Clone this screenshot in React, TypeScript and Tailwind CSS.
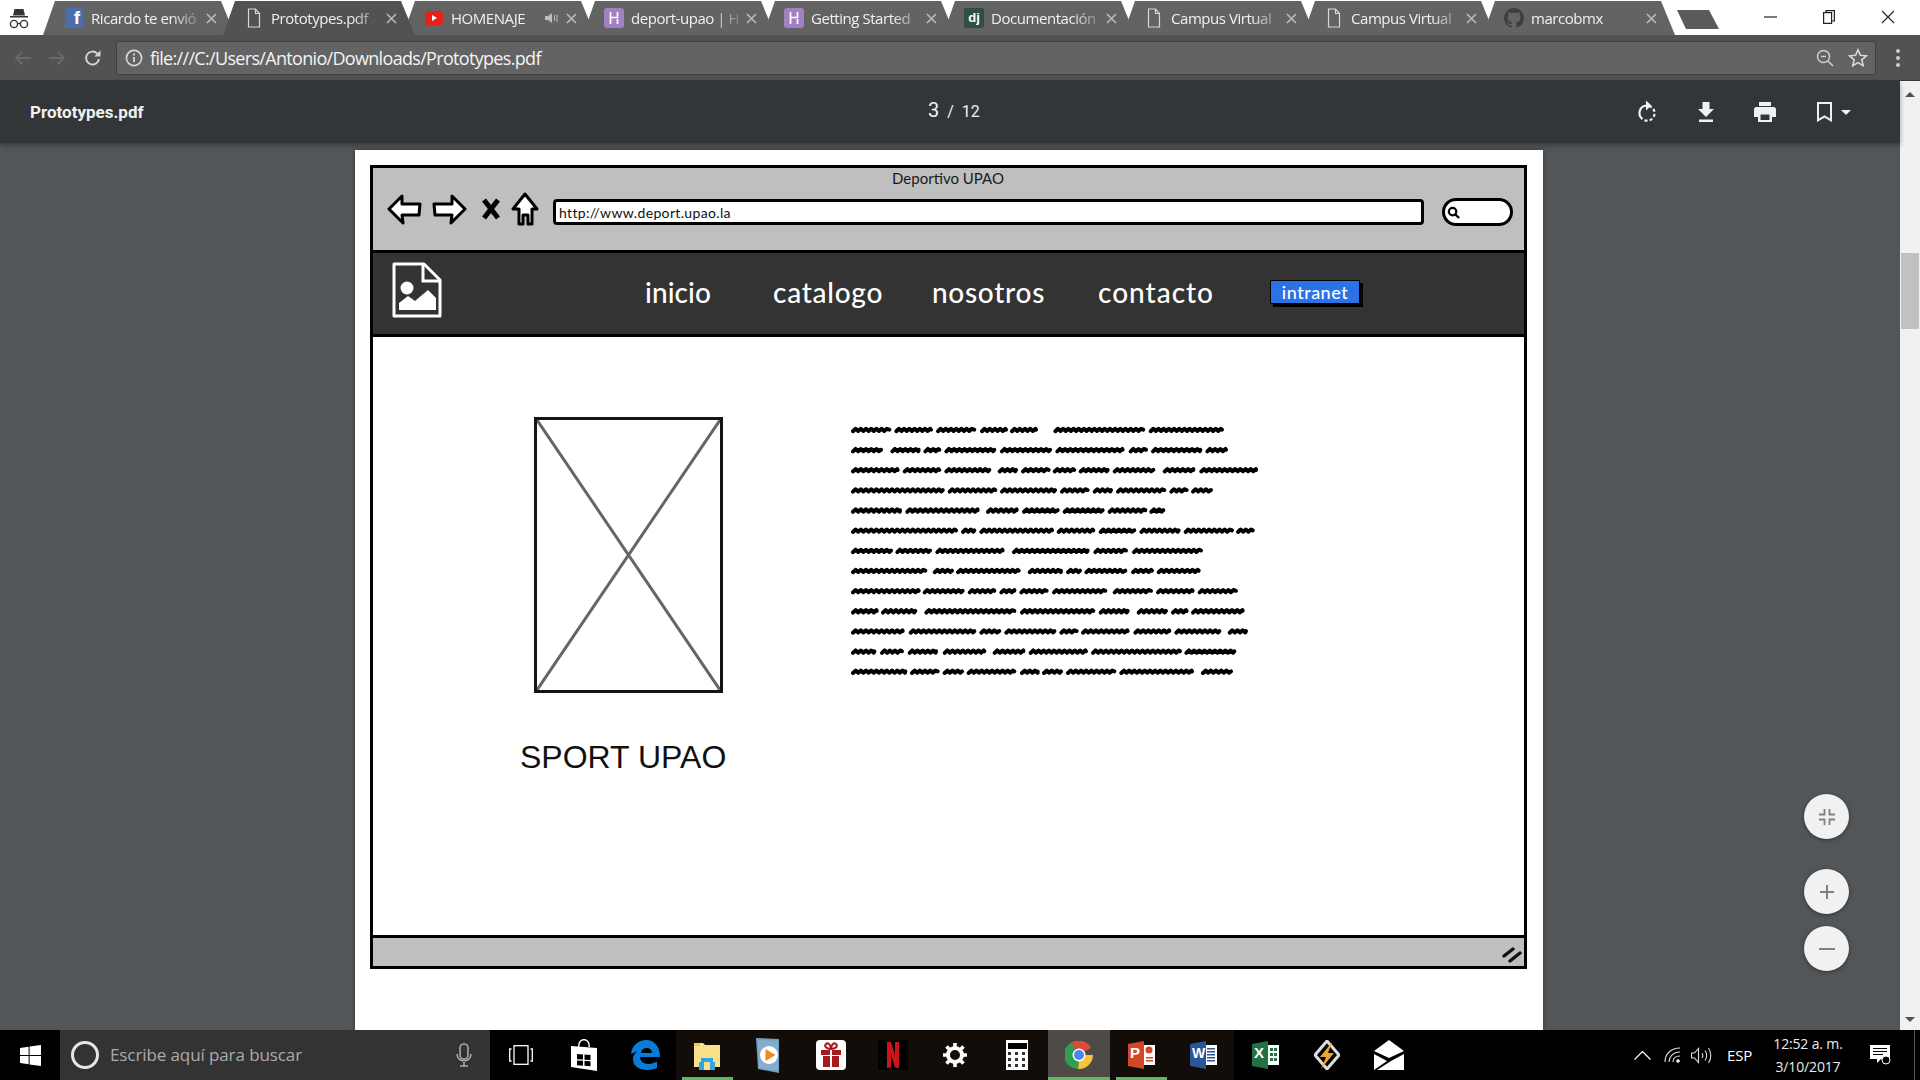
import React from "react";

const WORDS: number[][][] = [
  [[35,150],[165,275],[290,405],[422,500],[512,590],[642,912],[928,1148]],
  [[35,125],[153,238],[252,300],[315,465],[482,632],[648,850],[868,920],[935,1083],[1098,1160]],
  [[35,175],[190,300],[315,450],[475,530],[545,628],[640,705],[718,805],[820,942],[970,1062],[1080,1250]],
  [[35,310],[325,468],[482,647],[662,745],[760,815],[830,975],[990,1042],[1055,1115]],
  [[35,182],[198,415],[440,532],[548,655],[670,790],[805,918],[930,972]],
  [[35,350],[365,405],[420,638],[652,762],[778,885],[900,1018],[1033,1178],[1190,1240]],
  [[35,155],[168,272],[288,490],[518,745],[762,860],[878,1085]],
  [[35,258],[280,338],[350,538],[565,665],[680,722],[735,858],[875,938],[952,1078]],
  [[35,238],[250,370],[385,465],[480,525],[540,622],[638,798],[820,935],[950,1060],[1075,1190]],
  [[35,112],[125,228],[255,525],[542,762],[778,865],[892,980],[995,1042],[1055,1210]],
  [[35,190],[208,405],[420,480],[495,645],[660,712],[725,865],[882,990],[1005,1140],[1165,1220]],
  [[35,105],[122,188],[205,290],[310,435],[460,552],[568,740],[755,1022],[1035,1185]],
  [[35,198],[212,295],[310,368],[382,525],[542,595],[608,665],[680,825],[840,1058],[1085,1175]],
];

function wave(x0: number, x1: number, y: number) {
  let d = `M${x0} ${y + 1.2}`;
  let i = 0;
  for (let x = x0 + 2.6; x < x1; x += 2.6) {
    d += `L${x} ${y + (i % 2 === 0 ? -1.2 : 1)}`;
    i++;
  }
  return d + `L${x1} ${y - 0.4}`;
}

function Scribble() {
  return (
    <svg width="420" height="260" viewBox="0 0 420 260" className="blur-[0.7px]">
      {WORDS.map((line, li) =>
        line.map(([a, b], wi) => (
          <path key={`${li}-${wi}`} d={wave((a - 35) / 3 + 2, (b - 35) / 3, 7 + li * 20.15)} fill="none" stroke="#000" strokeWidth="4" strokeLinecap="round" strokeLinejoin="round" />
        ))
      )}
    </svg>
  );
}

const GH = () => (
  <svg width="20" height="20" viewBox="0 0 16 16" fill="#3e3e3e">
    <path d="M8 0C3.58 0 0 3.58 0 8c0 3.54 2.29 6.53 5.47 7.59.4.07.55-.17.55-.38 0-.19-.01-.82-.01-1.49-2.01.37-2.53-.49-2.69-.94-.09-.23-.48-.94-.82-1.13-.28-.15-.68-.52-.01-.53.63-.01 1.08.58 1.23.82.72 1.21 1.87.87 2.33.66.07-.52.28-.87.51-1.07-1.78-.2-3.64-.89-3.64-3.95 0-.87.31-1.59.82-2.15-.08-.2-.36-1.02.08-2.12 0 0 .67-.21 2.2.82.64-.18 1.32-.27 2-.27s1.36.09 2 .27c1.53-1.04 2.2-.82 2.2-.82.44 1.1.16 1.92.08 2.12.51.56.82 1.27.82 2.15 0 3.07-1.87 3.75-3.65 3.95.29.25.54.73.54 1.48 0 1.07-.01 1.93-.01 2.2 0 .21.15.46.55.38A8.01 8.01 0 0016 8c0-4.42-3.58-8-8-8z" />
  </svg>
);

const DocIcon = () => (
  <svg width="16" height="20" viewBox="0 0 16 20" fill="none" stroke="#d8d8d8" strokeWidth="1.2">
    <path d="M2.5 1h7l4 4.5V19h-11zM9.5 1v4.5h4" />
  </svg>
);

const Hugo = () => (
  <div className="w-5 h-5 rounded-[3px] bg-[#a082c2] flex items-center justify-center">
    <svg width="12" height="14" viewBox="0 0 12 14" fill="none" stroke="#fff" strokeWidth="1.7"><path d="M2.5 1v12M9.5 1v5.5H2.5M9.5 8v5" /></svg>
  </div>
);

type TabInfo = { icon: React.ReactNode; title: string; active?: boolean; extra?: React.ReactNode };

const TABS: TabInfo[] = [
  { title: "Ricardo te envió", icon: <div className="w-[18px] h-[20px] bg-[#4a6ea9] flex items-end justify-end overflow-hidden rounded-[1px]"><span className="text-white font-bold text-[19px] leading-[20px] pr-[3px] font-['Liberation_Sans',sans-serif]">f</span></div> },
  { title: "Prototypes.pdf", icon: <DocIcon />, active: true },
  {
    title: "HOMENAJE",
    icon: <div className="w-[18px] h-[14px] rounded-[3px] bg-[#e62117] flex items-center justify-center"><div className="w-0 h-0 border-y-[3px] border-y-transparent border-l-[5px] border-l-white" /></div>,
    extra: <svg width="13" height="12" viewBox="0 0 13 12" fill="#bdbdbd" className="absolute left-[142px] top-[12px]"><path d="M0 4h3l4-3v10l-4-3H0z" /><path d="M9 3h1v6H9zM11.5 2h1v8h-1z" /></svg>,
  },
  { title: "deport-upao | H", icon: <Hugo /> },
  { title: "Getting Started", icon: <Hugo /> },
  { title: "Documentación", icon: <div className="w-5 h-5 rounded-[2px] bg-[#2f4f43] flex items-center justify-center"><span className="text-white text-[13px] font-bold font-['Liberation_Sans',sans-serif]">dj</span></div> },
  { title: "Campus Virtual", icon: <DocIcon /> },
  { title: "Campus Virtual", icon: <DocIcon /> },
  { title: "marcobmx", icon: <GH /> },
];

function Tab({ t }: { t: TabInfo }) {
  return (
    <div className={`relative w-[192px] h-[35px] -mr-[12px] shrink-0 [clip-path:polygon(0_100%,12px_1px,178px_1px,192px_100%)] ${t.active ? "bg-[#525252] z-10" : "bg-[#636363]"}`}>
      <div className="absolute left-[21px] top-[8px] w-[20px] h-[20px] flex items-center justify-center">{t.icon}</div>
      <div className="absolute left-[48px] top-[6px] w-[112px] h-[24px] overflow-hidden whitespace-nowrap text-[15px] leading-[24px] text-[#f0f0f0] font-['Open_Sans',sans-serif] tracking-[-0.45px] [mask-image:linear-gradient(90deg,#000_72%,rgba(0,0,0,0.2)_96%)]">{t.title}</div>
      {t.extra}
      <svg width="11" height="11" viewBox="0 0 11 11" stroke="#bdbdbd" strokeWidth="1.5" className="absolute left-[163px] top-[13px]"><path d="M1 1l9 9M10 1l-9 9" /></svg>
    </div>
  );
}

function TabStrip() {
  return (
    <div className="h-[35px] bg-white flex shrink-0 relative">
      <div className="w-[43px] shrink-0 flex items-center justify-center">
        <svg width="20" height="24" viewBox="0 0 20 24" fill="none" className="mr-[5px]">
          <path d="M1 10h18v1.4H1zM4 9.5L5.5 3h9L16 9.5z" fill="#333" />
          <circle cx="5" cy="18" r="3.6" stroke="#333" strokeWidth="1.4" />
          <circle cx="15" cy="18" r="3.6" stroke="#333" strokeWidth="1.4" />
          <path d="M8.6 17.5h2.8" stroke="#333" strokeWidth="1.2" />
        </svg>
      </div>
      {TABS.map((t, i) => <Tab key={i} t={t} />)}
      <div className="ml-[14px] mt-[10px] w-[42px] h-[19px] bg-[#5a5a5a] [clip-path:polygon(0_0,32px_0,42px_100%,9px_100%)] shrink-0" />
      <div className="flex-1" />
      <div className="flex items-center pr-[25px] gap-[46px] pb-[1px]">
        <svg width="13" height="2" viewBox="0 0 13 2"><path d="M0 1h13" stroke="#222" strokeWidth="1.2" /></svg>
        <svg width="12" height="14" viewBox="0 0 12 14" fill="none" stroke="#222" strokeWidth="1.2"><path d="M.6 2.6h8v10.8h-8zM3 2.5V.6h8.4v10.4H8.8" /></svg>
        <svg width="14" height="14" viewBox="0 0 14 14" stroke="#222" strokeWidth="1.1"><path d="M1 1l12 12M13 1L1 13" /></svg>
      </div>
    </div>
  );
}

function Toolbar() {
  return (
    <div className="h-[46px] bg-[#525252] flex items-center shrink-0 border-b border-[#3a3a3a]">
      <div className="w-[116px] pl-[14px] flex items-center gap-[16px] shrink-0">
        <svg width="18" height="16" viewBox="0 0 18 16" fill="none" stroke="#696969" strokeWidth="1.8"><path d="M17 8H2M8.5 1.5L2 8l6.5 6.5" /></svg>
        <svg width="18" height="16" viewBox="0 0 18 16" fill="none" stroke="#696969" strokeWidth="1.8"><path d="M1 8h15M9.5 1.5L16 8l-6.5 6.5" /></svg>
        <svg width="18" height="18" viewBox="0 0 18 18" fill="none" className="ml-[2px]"><path d="M15 10a6.5 6.5 0 1 1-1.9-5.6L15 6.3" stroke="#d4d4d4" strokeWidth="1.9" /><path d="M16.5 1.3v6.2h-6.2z" fill="#d4d4d4" /></svg>
      </div>
      <div className="h-[34px] flex-1 rounded-[2px] bg-[#636363] border border-[#3f3f3f] flex items-center mr-[13px]">
        <svg width="18" height="18" viewBox="0 0 18 18" fill="none" className="ml-[8px]"><circle cx="9" cy="9" r="7.6" stroke="#d8d8d8" strokeWidth="1.6" /><path d="M9 8v5M9 4.6v2" stroke="#d8d8d8" strokeWidth="1.8" /></svg>
        <span className="ml-[7px] pt-[1px] text-[18px] text-[#f4f4f4] font-['Open_Sans',sans-serif] tracking-[-0.68px] whitespace-nowrap">file:///C:/Users/Antonio/Downloads/Prototypes.pdf</span>
        <div className="flex-1" />
        <svg width="18" height="18" viewBox="0 0 18 18" fill="none" stroke="#cfcfcf" strokeWidth="1.5" className="mr-[14px]"><circle cx="7.5" cy="7.5" r="6" /><path d="M5 7.5h5M12 12l5 5" /></svg>
        <svg width="20" height="19" viewBox="0 0 20 19" fill="none" stroke="#d8d8d8" strokeWidth="1.6" className="mr-[7px]"><path d="M10 1.8l2.4 5.5 6 .5-4.6 4 1.4 5.9-5.2-3.1-5.2 3.1 1.4-5.9-4.6-4 6-.5z" /></svg>
      </div>
      <div className="w-[20px] mr-[12px] -ml-[1px] flex flex-col items-center gap-[3px] shrink-0">
        <div className="w-1 h-1 rounded-full bg-[#cfcfcf]" /><div className="w-1 h-1 rounded-full bg-[#cfcfcf]" /><div className="w-1 h-1 rounded-full bg-[#cfcfcf]" />
      </div>
    </div>
  );
}

function PdfBar() {
  return (
    <div className="h-[62px] bg-[#323639] flex items-center relative z-10 shrink-0 shadow-[0_2px_5px_rgba(0,0,0,0.35)] text-[#f1f1f1] font-['Roboto',sans-serif]">
      <div className="w-[928px] pl-[30px] pt-[2px] text-[17px] font-bold shrink-0">Prototypes.pdf</div>
      <div className="flex items-baseline w-[250px] shrink-0 -mt-[4px]">
        <span className="text-[20px]">3</span>
        <span className="text-[16px] ml-[8px]">/</span>
        <span className="text-[16px] ml-[8px]">12</span>
      </div>
      <div className="flex-1" />
      <div className="flex items-center pr-[49px]">
        <svg width="20" height="24" viewBox="0 0 20 24" fill="none" className="mr-[40px]">
          <path d="M9.500 5.500a7.500 7.500 0 0 0-4 13.500" stroke="#f1f1f1" strokeWidth="2.2" />
          <path d="M12 6a7.500 7.500 0 0 1 0 14.500 7.500 7.500 0 0 1-5-.5" stroke="#f1f1f1" strokeWidth="2.2" strokeDasharray="3 2.2" />
          <path d="M9 0.500l5.500 5L9 10.500z" fill="#f1f1f1" />
        </svg>
        <svg width="18" height="20" viewBox="0 0 18 20" fill="#f1f1f1" className="mr-[39px]"><path d="M5.5 0h7v7H17l-8 8-8-8h4.500zM2 17.500h14V20H2z" /></svg>
        <svg width="22" height="20" viewBox="0 0 22 20" fill="#f1f1f1" className="mr-[41px]"><path d="M5 0h12v4H5zM2.500 5h17A2.500 2.500 0 0 1 22 7.500V15h-4v5H4v-5H0V7.500A2.500 2.500 0 0 1 2.500 5z" /><path d="M6.500 12.500h9V18h-9z" fill="#323639" /></svg>
        <svg width="15" height="20" viewBox="0 0 15 20" fill="none" stroke="#f1f1f1" strokeWidth="2" className="mr-[9px]"><path d="M1 1h13v17.300l-6.500-4-6.500 4z" /></svg>
        <div className="w-0 h-0 border-x-[5px] border-x-transparent border-t-[5px] border-t-[#f1f1f1]" />
      </div>
    </div>
  );
}

const fontHand = "font-['Lato',sans-serif]";

function WireTitle() {
  return (
    <div className="h-[85px] bg-[#bfbfbf] border-b-[3px] border-black flex flex-col shrink-0 relative">
      <div className={`text-center text-[15px] leading-[20px] pr-[1px] text-[#1a1a1a] ${fontHand}`}>Deportivo UPAO</div>
      <div className="flex items-center pl-[14px] mt-[10px]">
        <div className="flex items-center -mt-[7px] shrink-0">
          <svg width="36" height="32" viewBox="0 0 36 32" fill="#fff" stroke="#000" strokeWidth="3" strokeLinejoin="round"><path d="M2 16L15 3v8h18l-1 11H15l1 8z" /></svg>
          <svg width="36" height="32" viewBox="0 0 36 32" fill="#fff" stroke="#000" strokeWidth="3" strokeLinejoin="round" className="ml-[8px]"><path d="M34 16L21 3v8H3l1 11h17l-1 8z" /></svg>
          <svg width="20" height="22" viewBox="0 0 20 22" stroke="#000" strokeWidth="5" className="ml-[14px]"><path d="M3 2l14 18M17 2L3 20" /></svg>
          <svg width="28" height="34" viewBox="0 0 28 34" fill="#fff" stroke="#000" strokeWidth="3" strokeLinejoin="round" className="ml-[10px]"><path d="M14 2L2 17h6v15h4V23h5v9h4V17h5z" /></svg>
        </div>
        <div className="ml-[14px] w-[871px] h-[26px] bg-white border-[3px] border-black rounded-[4px] flex items-center pl-[3px] shrink-0 overflow-hidden">
          <span className={`text-[14px] tracking-[0.35px] text-[#111] ${fontHand}`}>http://www.deport.upao.la</span>
        </div>
        <div className="ml-[18px] w-[71px] h-[28px] bg-white border-[3px] border-black rounded-full flex items-center pl-[2px] shrink-0">
          <svg width="13" height="13" viewBox="0 0 14 14" fill="none" stroke="#000" strokeWidth="2.4"><circle cx="6" cy="6" r="4" /><path d="M9 9l4 4" /></svg>
        </div>
      </div>
    </div>
  );
}

function WireNav() {
  return (
    <div className="h-[84px] bg-[#333333] border-b-[3px] border-black flex items-center shrink-0 relative">
      <svg width="50" height="56" viewBox="0 0 50 56" fill="none" className="ml-[19px] -mt-[8px] shrink-0">
        <path d="M2 2h30l16 16v36H2z" stroke="#fff" strokeWidth="3" strokeLinejoin="round" />
        <path d="M31 2v17h17" stroke="#fff" strokeWidth="3" />
        <circle cx="15" cy="26" r="6.500" fill="#fff" />
        <path d="M7 48v-7l9-7 7 5 13-11 8 8v12z" fill="#fff" />
      </svg>
      <div className={`flex items-center text-white text-[28px] font-medium -mt-[3px] ${fontHand} shrink-0`}>
        <span className="ml-[203px] w-[64px] whitespace-nowrap tracking-[0.1px]">inicio</span>
        <span className="ml-[64px] w-[110px] whitespace-nowrap tracking-[0.75px]">catalogo</span>
        <span className="ml-[49px] w-[113px] whitespace-nowrap tracking-[0.7px]">nosotros</span>
        <span className="ml-[53px] w-[115px] whitespace-nowrap tracking-[1px]">contacto</span>
      </div>
      <div className={`ml-[57px] -mt-[3px] w-[90px] h-[24px] bg-[#2a72e6] border border-black shadow-[3px_3px_0_#000] flex items-center justify-center text-white text-[18px] font-medium tracking-[0.5px] ${fontHand} shrink-0`}>intranet</div>
    </div>
  );
}

function WireBody() {
  return (
    <div className="flex-1 bg-white border-b-[3px] border-black flex min-h-0">
      <div className="flex flex-col shrink-0 ml-[146px] mt-[80px]">
        <div className="ml-[15px] w-[189px] h-[276px] border-[3px] border-[#141414] shrink-0">
          <svg width="183" height="270" viewBox="0 0 183 270" stroke="#666" strokeWidth="3"><path d="M0 0L183 270M183 0L0 270" /></svg>
        </div>
        <div className="mt-[44px] ml-[1px] w-[210px] text-[32px] leading-[40px] text-[#111] whitespace-nowrap font-['Liberation_Sans',sans-serif] tracking-[0px]">SPORT UPAO</div>
      </div>
      <div className="ml-[121px] mt-[86px] shrink-0">
        <Scribble />
      </div>
    </div>
  );
}

function Wireframe() {
  return (
    <div className="ml-[15px] mr-[16px] mt-[15px] h-[804px] border-[3px] border-black flex flex-col">
      <WireTitle />
      <WireNav />
      <WireBody />
      <div className="h-[28px] bg-[#bfbfbf] shrink-0 flex items-center justify-end pr-[2px] pt-[5px]">
        <svg width="20" height="16" viewBox="0 0 20 16" stroke="#111" strokeWidth="3.400" strokeLinecap="round"><path d="M2 9L11 2M8 14L18 6" /></svg>
      </div>
    </div>
  );
}

function RoundBtn({ children, className = "" }: { children: React.ReactNode; className?: string }) {
  return <div className={`w-[45px] h-[45px] rounded-full bg-[#f1f1f1] shadow-[0_1px_4px_rgba(0,0,0,0.4)] flex items-center justify-center ${className}`}>{children}</div>;
}

function Viewer() {
  return (
    <div className="flex-1 flex min-h-0">
      <div className="flex-1 flex flex-col min-w-0">
        <PdfBar />
        <div className="flex-1 bg-[#525659] relative flex min-h-0 pl-[355px] pr-[357px] pt-[7px] overflow-hidden">
          <div className="flex-1 bg-white shadow-[0_0_4px_rgba(0,0,0,0.4)]">
            <Wireframe />
          </div>
          <div className="absolute right-[51px] top-[651px] flex flex-col">
            <RoundBtn>
              <svg width="16" height="16" viewBox="0 0 16 16" fill="none" stroke="#808080" strokeWidth="1.800"><path d="M5.500 0v5.500H0M10.500 0v5.500H16M0 10.500h5.500V16M16 10.500h-5.500V16" /></svg>
            </RoundBtn>
            <RoundBtn className="mt-[30px]">
              <svg width="16" height="16" viewBox="0 0 16 16" fill="#808080"><path d="M7 1h2v6h6v2H9v6H7V9H1V7h6z" /></svg>
            </RoundBtn>
            <RoundBtn className="mt-[12px]">
              <svg width="16" height="2" viewBox="0 0 16 2" fill="#808080"><path d="M0 0h16v2H0z" /></svg>
            </RoundBtn>
          </div>
        </div>
      </div>
      <div className="w-[20px] bg-[#f1f1f1] flex flex-col items-center shrink-0">
        <div className="h-[26px] flex items-center justify-center"><div className="w-0 h-0 border-x-[5px] border-x-transparent border-b-[5px] border-b-[#505050]" /></div>
        <div className="mt-[146px] w-[18px] h-[76px] bg-[#c1c1c1]" />
        <div className="flex-1" />
        <div className="h-[22px] flex items-center justify-center"><div className="w-0 h-0 border-x-[5px] border-x-transparent border-t-[5px] border-t-[#505050]" /></div>
      </div>
    </div>
  );
}

function Slot({ children, active, under, className = "" }: { children: React.ReactNode; active?: boolean; under?: boolean; className?: string }) {
  return (
    <div className={`relative w-[62px] h-[50px] flex items-center justify-center shrink-0 ${active ? "bg-[#4d4a47]" : ""} ${className}`}>
      {children}
      {under && <div className={`absolute bottom-0 h-[3px] bg-[#62b565] ${active ? "left-0 right-0" : "left-[6px] right-[5px]"}`} />}
    </div>
  );
}

function Taskbar() {
  return (
    <div className="h-[50px] bg-black flex items-center shrink-0 relative">
      <div className="w-[60px] flex items-center justify-center shrink-0">
        <svg width="21" height="21" viewBox="0 0 21 21" fill="#fff"><path d="M0 3l8.600-1.200v8.100H0zM9.600 1.600L21 0v9.900H9.600zM0 11h8.600v8.200L0 18zM9.600 11H21v10L9.600 19.400z" /></svg>
      </div>
      <div className="w-[430px] h-[50px] bg-[#333333] flex items-center shrink-0">
        <div className="ml-[11px] w-[28px] h-[28px] rounded-full border-[3.5px] border-[#e6e6e6]" />
        <span className="ml-[11px] text-[17px] text-[#ababab] font-['Open_Sans',sans-serif] tracking-[-0.1px]">Escribe aquí para buscar</span>
        <div className="flex-1" />
        <svg width="16" height="24" viewBox="0 0 16 24" fill="none" stroke="#a8a8a8" strokeWidth="1.600" className="mr-[18px]"><rect x="4" y="1" width="8" height="15" rx="4" /><path d="M1 11c0 9 14 9 14 0M8 19v4M4 23h8" /></svg>
      </div>
      <div className="w-[61px] mr-[2px] flex items-center justify-center shrink-0">
        <svg width="24" height="20" viewBox="0 0 24 20" fill="none" stroke="#fff" strokeWidth="1.300"><rect x="5" y=".7" width="14" height="18.600" /><path d="M2.500 4H.7v12h1.800M21.500 4h1.800v12h-1.800" /></svg>
      </div>
      <Slot>
        <svg width="26" height="32" viewBox="0 0 26 32" fill="#fff"><path d="M7 8C7 1 11 0 13 0s6 1 6 8h-1.400C17.600 3 15.500 1.500 13 1.500S8.400 3 8.400 8z" /><path d="M0 7l26 2v23L0 28z" /><path d="M6 15l6 .5v5l-6-.3zM13.500 15.600l6 .4v5l-6-.3zM6 21.500l6 .3v5l-6-.5zM13.500 22l6 .3v5l-6-.5z" fill="#000" /></svg>
      </Slot>
      <Slot className="-ml-[1px]">
        <svg width="30" height="30" viewBox="0 0 30 30"><path d="M1 14C2 5 9 0 16 0c8 0 14 6 14 17H10c.4 7 9 9 17 4.500v6.500c-10 4-24 2-24-9 0-4 3-8 8-9-4 1-7 3-10 4zm10-1h11c0-6-10-7-11 0z" fill="#0a7bd8" /></svg>
      </Slot>
      <div className="relative h-[50px] flex bg-[#120d09]">
        <Slot under>
          <svg width="28" height="30" viewBox="0 0 28 30"><path d="M1 3h9l2 2h15v22H1z" fill="#fbe08a" /><path d="M1 3h6v3H1z" fill="#f5c94f" /><path d="M8 18h12v4h2v8H6v-8h2z" fill="#2fa4e7" /><path d="M11 22h6v8h-6z" fill="#fbe08a" /></svg>
        </Slot>
        <Slot className="-ml-[1px]">
          <svg width="26" height="38" viewBox="0 0 26 38"><path d="M1 2l23 1v34L3 33z" fill="#6f9fc0" /><path d="M3 4l20 1v30L4 32z" fill="#86aecb" /><circle cx="14" cy="19" r="9" fill="#fff" /><path d="M10.500 13l10 6-10 6z" fill="#ef8a1f" /></svg>
        </Slot>
        <Slot className="ml-[1px]">
          <div className="w-[30px] h-[30px] bg-white rounded-[4px] flex items-center justify-center">
            <svg width="22" height="26" viewBox="0 0 22 26" fill="#a6191c"><path d="M1 8h9v5H1zM12 8h9v5h-9zM3 14h7v11H3zM12 14h7v11h-7z" /><path d="M11 7C6 7 4 4 6 2c2-2 5 1 5 5zm0 0c5 0 7-3 5-5-2-2-5 1-5 5z" fill="none" stroke="#a6191c" strokeWidth="2" /></svg>
          </div>
        </Slot>
        <Slot>
          <div className="w-[30px] h-[30px] bg-black flex items-center justify-center">
            <svg width="12" height="26" viewBox="0 0 12 26" fill="#d0141b"><path d="M0 0h4l4 13V0h4v26l-4-.5L4 12v13.500L0 26z" /></svg>
          </div>
        </Slot>
        <Slot>
          <svg width="24" height="24" viewBox="0 0 24 24" fill="none"><circle cx="12" cy="12" r="7" stroke="#fff" strokeWidth="4" /><path d="M12 0v5M12 19v5M0 12h5M19 12h5M3.500 3.500L7 7M17 17l3.500 3.500M20.500 3.500L17 7M7 17l-3.500 3.500" stroke="#fff" strokeWidth="3.600" /></svg>
        </Slot>
        <Slot>
          <div className="w-[22px] h-[30px] bg-white flex flex-col items-center pt-[3px]">
            <div className="w-[19px] h-[6px] bg-black" />
            <svg width="20" height="18" viewBox="0 0 20 18" fill="#333" className="mt-[2px]"><path d="M1 1h3v3H1zM8 1h3v3H8zM15 1h3v3h-3zM1 7h3v3H1zM8 7h3v3H8zM15 7h3v3h-3zM1 13h3v3H1zM8 13h3v3H8zM15 13h3v3h-3z" /></svg>
          </div>
        </Slot>
        <Slot active under>
          <svg width="28" height="28" viewBox="0 0 28 28">
            <path d="M14 14L6.500 1.500A14 14 0 0 1 26 7z" fill="#dd4b39" />
            <path d="M14 14H28A14 14 0 0 1 13 28z" fill="#f6c33a" />
            <path d="M14 14L13 28A14 14 0 0 1 6.500 1.500z" fill="#2f9e4f" />
            <circle cx="14" cy="14" r="6.500" fill="#fff" /><circle cx="14" cy="14" r="5" fill="#4d86ea" />
          </svg>
        </Slot>
        <Slot under>
          <svg width="27" height="28" viewBox="0 0 27 28"><path d="M0 3l16-3v28L0 25z" fill="#d24726" /><path d="M16 4h11v20H16z" fill="#fff" /><path d="M18 16h7v1.500h-7zM18 19h7v1.500h-7z" fill="#d24726" /><circle cx="21" cy="9" r="3.500" fill="#d24726" /></svg>
          <span className="absolute left-[20px] top-[14px] text-white text-[15px] font-bold leading-[18px] font-['Liberation_Sans',sans-serif]">P</span>
        </Slot>
        <Slot>
          <svg width="27" height="28" viewBox="0 0 27 28"><path d="M0 3l16-3v28L0 25z" fill="#2a5699" /><path d="M16 4h11v20H16z" fill="#fff" /><path d="M17 7h8v1.500h-8zM17 10h8v1.500h-8zM17 13h8v1.500h-8zM17 16h8v1.500h-8zM17 19h8v1.500h-8z" fill="#2a5699" /></svg>
          <span className="absolute left-[20px] top-[14px] text-white text-[14px] font-bold leading-[18px] font-['Liberation_Sans',sans-serif]">W</span>
        </Slot>
      </div>
      <Slot>
        <svg width="27" height="28" viewBox="0 0 27 28"><path d="M0 3l16-3v28L0 25z" fill="#207245" /><path d="M16 4h11v20H16z" fill="#fff" /><path d="M18 7h3v3h-3zM22 7h3v3h-3zM18 12h3v3h-3zM22 12h3v3h-3zM18 17h3v3h-3zM22 17h3v3h-3z" fill="#207245" /></svg>
        <span className="absolute left-[20px] top-[14px] text-white text-[15px] font-bold leading-[18px] font-['Liberation_Sans',sans-serif]">X</span>
      </Slot>
      <Slot>
        <svg width="26" height="30" viewBox="0 0 26 30"><path d="M13 1L1 15l12 14 12-14z" fill="none" stroke="#ddd" strokeWidth="3" /><path d="M18 2L6 17h6l-5 12 13-16h-6z" fill="#f0a22e" /></svg>
      </Slot>
      <Slot>
        <svg width="30" height="30" viewBox="0 0 30 30" fill="#fff"><path d="M15 0l15 11-15 7L0 11z" /><path d="M0 14l13 7-13 9zM3 30l14-9 13-7v16z" /></svg>
      </Slot>
      <div className="flex-1" />
      <div className="flex items-center text-white font-['Open_Sans',sans-serif] shrink-0">
        <svg width="17" height="9" viewBox="0 0 17 9" fill="none" stroke="#fff" strokeWidth="1.200" className="mr-[13px]"><path d="M.5 8.500l8-8 8 8" /></svg>
        <svg width="17" height="16" viewBox="0 0 17 16" fill="none" stroke="#ddd" strokeWidth="1.100" className="mr-[10px]"><path d="M1 15C1 7 7 1 16 1M5 15c0-5 4-10 11-10M9 15c0-3 2-6 7-6" /><circle cx="14" cy="14" r="1.800" fill="#fff" stroke="none" /></svg>
        <svg width="21" height="17" viewBox="0 0 21 17" fill="none" stroke="#ddd" strokeWidth="1.100" className="mr-[15px]"><path d="M.5 6h3l4-4.500v14l-4-4.500h-3zM11 6c1 1.500 1 3.500 0 5M14 3.500c2 3 2 7 0 10M17.500 1c3 4 3 11 0 15" /></svg>
        <span className="text-[15px] tracking-[-0.2px] w-[26px] mr-[19px]">ESP</span>
        <div className="w-[72px] flex flex-col items-center text-[14px] leading-[23px] text-[#eaeaea] tracking-[-0.15px] mr-[26px] whitespace-nowrap">
          <span>12:52 a. m.</span>
          <span>3/10/2017</span>
        </div>
        <svg width="21" height="20" viewBox="0 0 21 20" fill="#fff" className="mr-[23px]"><path d="M0 0h20v14H11l-4 4v-4H0z" /><path d="M3 3h14v1H3zM3 6h14v1H3zM3 9h10v1H3z" fill="#000" /><circle cx="16" cy="15" r="4" fill="#000" stroke="#fff" strokeWidth="1" /></svg>
        <div className="w-[1px] h-[50px] bg-[#555] mr-[5px]" />
      </div>
    </div>
  );
}

export default function App() {
  return (
    <div className="w-[1920px] h-[1080px] overflow-hidden flex flex-col bg-black">
      <TabStrip />
      <Toolbar />
      <Viewer />
      <Taskbar />
    </div>
  );
}
